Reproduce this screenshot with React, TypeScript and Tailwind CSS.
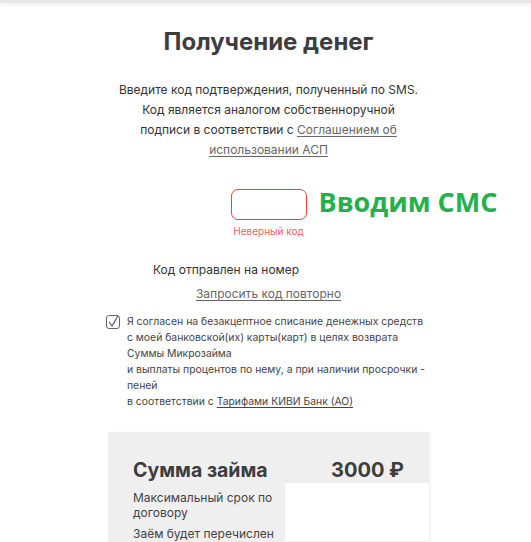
export default function App() {
  return (
    <div className="min-h-screen bg-white font-['Inter',sans-serif] text-[#333]">
      {/* верхняя полоса */}
      <div className="h-[3px] bg-[#e6e6e6] shadow-[0_1px_5px_rgba(0,0,0,0.12)]" />

      <div className="pl-[6px]">
        <div className="mx-auto w-[321px] flex flex-col">
          <h1 className="mt-[24px] text-center text-[24px] leading-[30px] font-bold text-[#3d3d3d]">
            Получение денег
          </h1>

          <p className="mt-[23px] text-center text-[12px] leading-[20px] text-[#333] whitespace-nowrap">
            Введите код подтверждения, полученный по SMS.
            <br />
            Код является аналогом собственноручной
            <br />
            подписи в соответствии с{" "}
            <a href="#" className="text-[#666] underline underline-offset-2">
              Соглашением об
              <br />
              использовании АСП
            </a>
          </p>

          {/* поле кода */}
          <div className="mt-[29px] flex flex-col items-center">
            <div className="relative">
              <input
                type="text"
                className="block w-[76px] h-[31px] rounded-[7px] border border-[#f2442a] outline-none px-2"
              />
              <span className="absolute left-[88px] top-[-5px] whitespace-nowrap font-['Open_Sans',sans-serif] text-[27px] leading-[36px] font-bold text-[#22b14c]">
                Вводим СМС
              </span>
            </div>
            <span className="mt-[4px] text-[10px] leading-[14px] text-[#f25c6a]">Неверный код</span>
          </div>

          <p className="mt-[22px] pl-[45px] text-[12px] leading-[20px] text-[#333]">Код отправлен на номер</p>
          <a href="#" className="mt-[4px] self-center text-[12px] leading-[20px] text-[#666] underline underline-offset-2">
            Запросить код повторно
          </a>

          {/* согласие */}
          <div className="mt-[10px] -ml-[2px] flex gap-[7px]">
            <div className="mt-[1px] w-[14px] h-[14px] shrink-0 rounded-[3px] border border-[#666] flex items-center justify-center">
              <svg width="12" height="12" viewBox="0 0 12 12" fill="none" stroke="#555" strokeWidth="1.2" strokeLinecap="round" strokeLinejoin="round">
                <path d="M2.5 6.5 L5 10 L10.5 0.5" />
              </svg>
            </div>
            <div className="text-[10.4px] leading-[16px] text-[#444] whitespace-nowrap">
              <div>Я согласен на безакцептное списание денежных средств</div>
              <div>с моей банковской(их) карты(карт) в целях возврата</div>
              <div>Суммы Микрозайма</div>
              <div>и выплаты процентов по нему, а при наличии просрочки -</div>
              <div>пеней</div>
              <div>
                в соответствии с{" "}
                <a href="#" className="text-[#444] underline underline-offset-2">
                  Тарифами КИВИ Банк (АО)
                </a>
              </div>
            </div>
          </div>

          {/* карточка займа */}
          <div className="mt-[22px] bg-[#efefef] shadow-[1px_1px_3px_rgba(0,0,0,0.08)] pt-[26px] grid grid-cols-[177px_144px] content-start h-[110px]">
            <h2 className="pl-[25px] pb-[1px] text-[19.5px] leading-[24px] font-bold text-[#3d3d3d]">Сумма займа</h2>
            <div className="pl-[46px] text-[20px] leading-[24px] font-bold text-[#3d3d3d] whitespace-nowrap">3000 ₽</div>
            <div className="pl-[25px] pt-[7px] text-[12px] leading-[15px] text-[#444]">
              <p>Максимальный срок по договору</p>
              <p className="mt-[6px]">Заём будет перечислен</p>
            </div>
            <div className="bg-white" />
          </div>
        </div>
      </div>
    </div>
  )
}
